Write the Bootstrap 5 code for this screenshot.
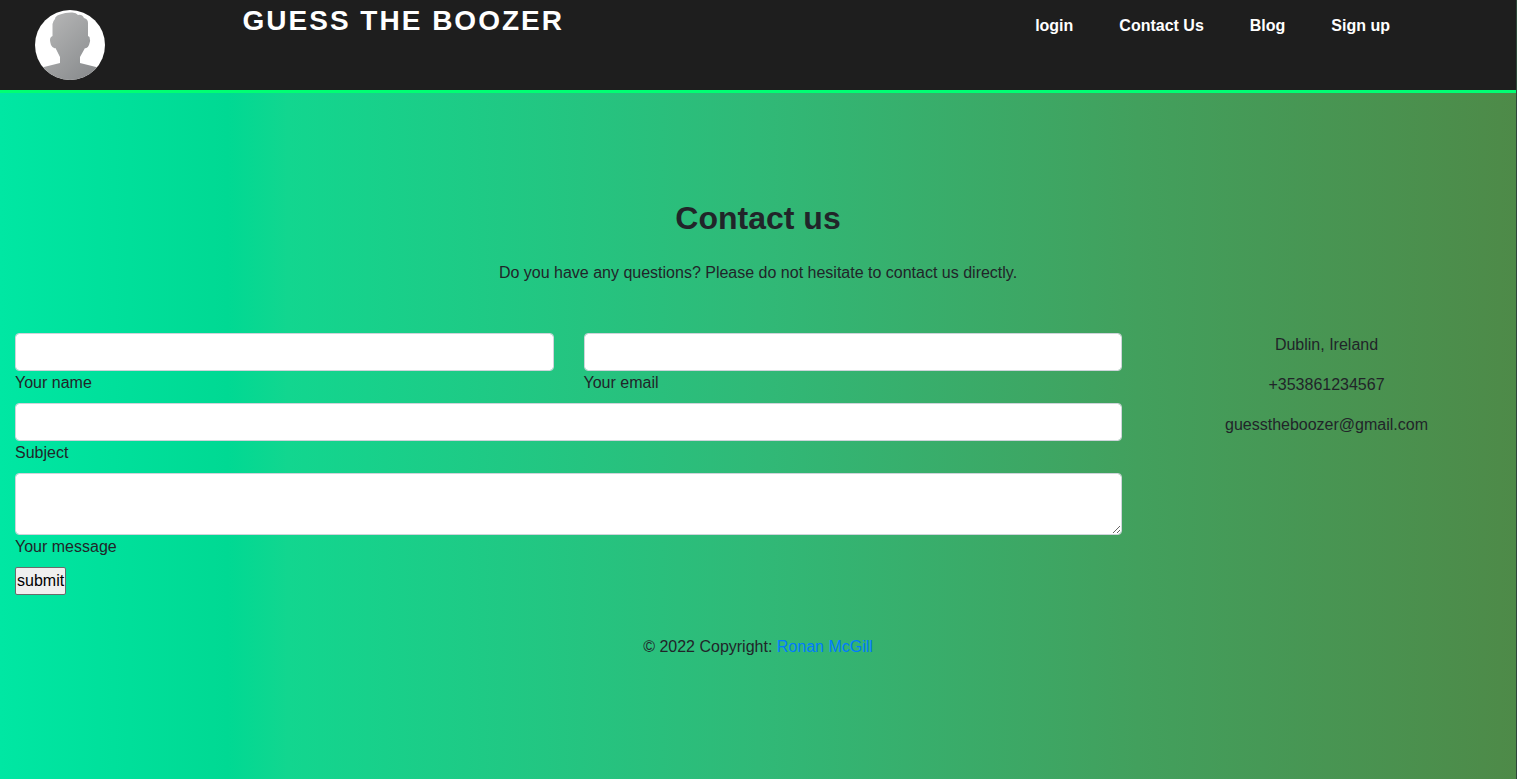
<!DOCTYPE html>
<html lang="en">
<head>
<meta charset="utf-8">
<meta name="viewport" content="width=device-width, initial-scale=1">
<title>Guess The Boozer - Contact us</title>
<link href="https://cdn.jsdelivr.net/npm/bootstrap@5.3.0/dist/css/bootstrap.min.css" rel="stylesheet">
<style>
  body {
    font-family: "Liberation Sans", Arial, sans-serif;
    color: #212529;
    background: linear-gradient(90deg, #00e7a3 0%, #00d993 15%, #12d68f 19%, #30b977 50%, #42a05d 75%, #4e8a48 100%);
    border-right: 1px solid #2d4739;
  }
  .site-header { background: #1e1e1e; border-bottom: 3px solid #00ff73; }
  .logo-cell { width: 16%; padding: 10px 35px; }
  .logo-cell svg { width: 70px; height: 70px; }
  .site-title { font-size: 28px; line-height: 34px; letter-spacing: 2px; margin-top: 4px; }
  .site-menu { gap: 46px; margin: 14px 126px 0 auto; }
  .contact-section { padding: 106px 0 40px; }
  .contact-section h2 { font-size: 32px; line-height: 38px; margin: 0 0 24px; }
  .intro { margin-bottom: 48px; }
  .form-control { border: 1px solid #ced4da; border-radius: 4px; height: 38px; }
  textarea.form-control { height: 62px; min-height: 62px; }
  .field { margin-bottom: 8px; }
  .gutter-wide { --bs-gutter-x: 30px; }
  .page { padding: 0 15px; }
  .send { height: 28px; padding: 0 1px; line-height: 24px; background: #efefef; color: #000; border: 1px solid #6b6b6b; border-radius: 2px; }
  .author { color: #007bff; }
</style>
</head>
<body class="min-vh-100">
<header class="site-header d-flex align-items-start">
  <div class="logo-cell">
    <a href="#" class="d-block" aria-label="Home">
      <svg class="d-block" viewBox="0 0 70 70" aria-hidden="true">
        <defs>
          <linearGradient id="shade" x1="0" y1="0" x2="1" y2="1">
            <stop offset="0" stop-color="#bcbcbc"/>
            <stop offset="1" stop-color="#828587"/>
          </linearGradient>
          <clipPath id="disc"><circle cx="35" cy="35" r="35"/></clipPath>
        </defs>
        <circle cx="35" cy="35" r="35" fill="#fff"/>
        <path clip-path="url(#disc)" fill="url(#shade)" d="M0 70V60L9 57L25 53V47L20.500 38Q18 39 16 35Q14 29 16 27L17.500 26V14Q18 11 20 9Q20 6 25 4.500Q30 2.500 36 2.500Q41 2 43 5Q47 4 49 8Q53 9 53 13V26L54.500 27Q56 31 54 35Q52.500 39 50 38L45 47V53L61 57L70 60V70Z"/>
      </svg>
    </a>
  </div>
  <h1 class="site-title fw-bold text-white mb-0">GUESS THE BOOZER</h1>
  <nav class="site-menu d-flex fw-bold" aria-label="Main">
    <a href="#" class="text-white text-decoration-none">login</a>
    <a href="#" class="text-white text-decoration-none">Contact Us</a>
    <a href="#" class="text-white text-decoration-none">Blog</a>
    <a href="#" class="text-white text-decoration-none">Sign up</a>
  </nav>
</header>

<main class="page container-fluid">
  <section class="contact-section">
    <h2 class="fw-bold text-center">Contact us</h2>
    <p class="intro text-center">Do you have any questions? Please do not hesitate to contact us directly.</p>
    <div class="row gutter-wide">
      <div class="col-md-9">
        <form>
          <div class="row gutter-wide">
            <div class="col-md-6 field">
              <input type="text" id="name" class="form-control">
              <label for="name" class="d-block">Your name</label>
            </div>
            <div class="col-md-6 field">
              <input type="text" id="email" class="form-control">
              <label for="email" class="d-block">Your email</label>
            </div>
          </div>
          <div class="field">
            <input type="text" id="subject" class="form-control">
            <label for="subject" class="d-block">Subject</label>
          </div>
          <div class="field">
            <textarea id="message" rows="2" class="form-control"></textarea>
            <label for="message" class="d-block">Your message</label>
          </div>
          <button type="button" class="send d-block">submit</button>
        </form>
      </div>
      <div class="col-md-3 text-center">
        <ul class="list-unstyled mb-0">
          <li><p>Dublin, Ireland</p></li>
          <li><p>+353861234567</p></li>
          <li><p>guesstheboozer@gmail.com</p></li>
        </ul>
      </div>
    </div>
  </section>
</main>

<footer class="text-center">© 2022 Copyright: <a href="#" class="author text-decoration-none">Ronan McGill</a></footer>
<script src="https://cdn.jsdelivr.net/npm/bootstrap@5.3.0/dist/js/bootstrap.bundle.min.js"></script>
</body>
</html>
